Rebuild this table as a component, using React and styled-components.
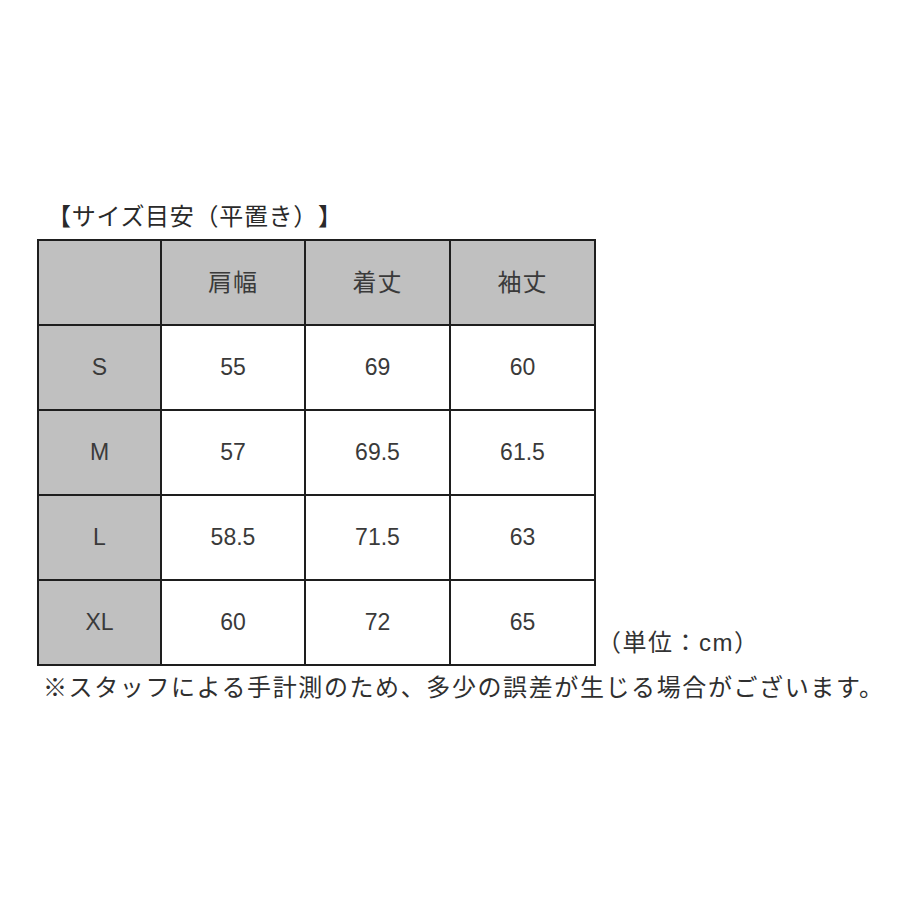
import React from "react";
import styled, { createGlobalStyle } from "styled-components";

const GlobalStyle = createGlobalStyle`
  html, body {
    margin: 0;
    padding: 0;
    background: #fff;
  }
  body {
    font-family: "Liberation Sans", "Noto Sans CJK JP", sans-serif;
    color: #333;
    text-spacing-trim: space-all;
  }
`;

const Page = styled.div`
  width: 900px;
  height: 900px;
  padding: 202px 0 0 37px;
  box-sizing: border-box;
`;

const Title = styled.div`
  font-size: 24px;
  line-height: 30px;
  height: 30px;
  margin: 0 0 7px 10px;
  letter-spacing: 0.7px;
  color: #2a2a2a;
  white-space: nowrap;
`;

const TableRow = styled.div`
  display: flex;
  align-items: flex-end;
`;

const Grid = styled.div`
  display: grid;
  grid-template-columns: 121px 142px 143px 143px;
  grid-auto-rows: 83px;
  gap: 2px;
  padding: 2px;
  background: #1e1e1e;
`;

const Cell = styled.div`
  display: flex;
  align-items: center;
  justify-content: center;
  background: ${(p) => (p.$shaded ? "#c0c0c0" : "#fff")};
  font-size: ${(p) => (p.$jp ? "24px" : "23px")};
  letter-spacing: ${(p) => (p.$jp ? "1px" : "0")};
  padding-bottom: ${(p) => (p.$jp ? "5px" : "0")};
  box-sizing: border-box;
  color: #3a3a3a;
`;

const Unit = styled.div`
  font-size: 24px;
  line-height: 30px;
  margin: 0 0 8px 1px;
  letter-spacing: 1.5px;
  color: #333;
  white-space: nowrap;
`;

const Note = styled.div`
  font-size: 24px;
  line-height: 30px;
  margin: 7px 0 0 6px;
  letter-spacing: 1.6px;
  color: #2f2f2f;
  white-space: nowrap;
`;

const headers = ["肩幅", "着丈", "袖丈"];
const rows = [
  ["S", "55", "69", "60"],
  ["M", "57", "69.5", "61.5"],
  ["L", "58.5", "71.5", "63"],
  ["XL", "60", "72", "65"],
];

export default function App() {
  return (
    <>
      <GlobalStyle />
      <Page>
        <Title>【サイズ目安（平置き）】</Title>
        <TableRow>
          <Grid>
            <Cell $shaded />
            {headers.map((h) => (
              <Cell key={h} $shaded $jp>
                {h}
              </Cell>
            ))}
            {rows.map((r) =>
              r.map((v, i) => (
                <Cell key={r[0] + i} $shaded={i === 0}>
                  {v}
                </Cell>
              ))
            )}
          </Grid>
          <Unit>（単位：cm）</Unit>
        </TableRow>
        <Note>※スタッフによる手計測のため、多少の誤差が生じる場合がございます。</Note>
      </Page>
    </>
  );
}
